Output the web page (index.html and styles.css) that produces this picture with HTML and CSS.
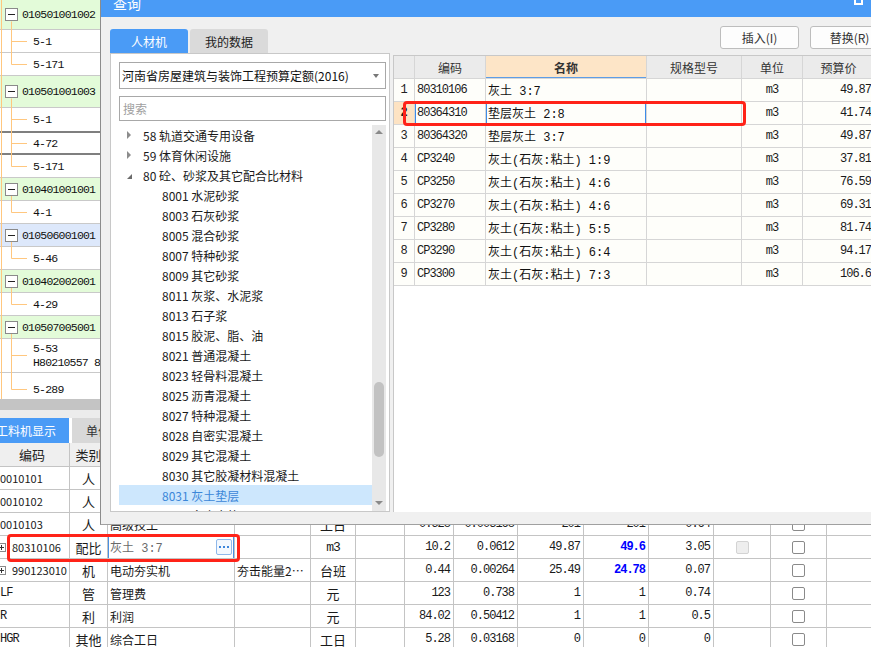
FILE: index.html
```html
<!DOCTYPE html>
<html lang="zh-CN">
<head>
<meta charset="utf-8">
<title>查询</title>
<link rel="stylesheet" href="styles.css">
</head>
<body>
<div class="app">
  <div class="upper">
    <div class="tree">
      <div class="trow grp h30"><span class="tbox"></span><span class="mono">010501001002</span></div>
      <div class="trow leaf"><span class="mono">5-1</span></div>
      <div class="trow leaf"><span class="mono">5-171</span></div>
      <div class="trow grp h32"><span class="tbox"></span><span class="mono">010501001003</span></div>
      <div class="trow leaf dark h25"><span class="mono">5-1</span></div>
      <div class="trow leaf dark h22"><span class="mono">4-72</span></div>
      <div class="trow leaf"><span class="mono">5-171</span></div>
      <div class="trow grp"><span class="tbox"></span><span class="mono">010401001001</span></div>
      <div class="trow leaf"><span class="mono">4-1</span></div>
      <div class="trow grp blue"><span class="tbox"></span><span class="mono">010506001001</span></div>
      <div class="trow leaf"><span class="mono">5-46</span></div>
      <div class="trow grp"><span class="tbox"></span><span class="mono">010402002001</span></div>
      <div class="trow leaf"><span class="mono">4-29</span></div>
      <div class="trow grp"><span class="tbox"></span><span class="mono">010507005001</span></div>
      <div class="trow leaf two"><span class="mono">5-53</span><span class="mono">H80210557 8:2</span></div>
      <div class="trow leaf last"><span class="mono">5-289</span></div>
      <svg class="tree-lines" width="101" height="399" viewBox="0 0 101 399" fill="none" stroke="#ffc77f" stroke-width="1">
        <path d="M1.5 0V399"/>
        <path d="M11.5 21.5V64.5M11.5 41.5H27M11.5 64.5H27"/>
        <path d="M11.5 98.5V166.5M11.5 119.5H27M11.5 143.5H27M11.5 166.5H27"/>
        <path d="M11.5 196V212.5H27"/>
        <path d="M11.5 242V258.5H27"/>
        <path d="M11.5 288V304.5H27"/>
        <path d="M11.5 334V389.5M11.5 355.5H27M11.5 389.5H27"/>
      </svg>
    </div>
    <div class="work"></div>
  </div>
  <div class="hscroll"></div>
  <div class="bgap"></div>
  <div class="bottom">
    <div class="btabs"><div class="btab on">工料机显示</div><div class="btab">单价构成</div><div class="btab">标准换算</div></div>
    <div class="bt">
      <div class="br bh"><div>编码</div><div>类别</div><div>名称</div><div>规格及型号</div><div>单位</div><div>损耗率</div><div>含量</div><div>数量</div><div>预算价</div><div>市场价</div><div>合价</div><div>是否暂估</div><div>锁定数量</div><div>原始含量</div></div>
      <div class="br"><div class="bc-code">0010101</div><div class="bc-c">人</div><div class="bc-n">普工</div><div></div><div class="bc-c">工日</div><div></div><div class="bc-r mono">0.176</div><div class="bc-r mono">0.001056</div><div class="bc-r mono">87.1</div><div class="bc-r mono">87.1</div><div class="bc-r mono">0.09</div><div></div><div class="bc-c"><span class="cb"></span></div><div></div></div>
      <div class="br"><div class="bc-code">0010102</div><div class="bc-c">人</div><div class="bc-n">一般技工</div><div></div><div class="bc-c">工日</div><div></div><div class="bc-r mono">0.352</div><div class="bc-r mono">0.002112</div><div class="bc-r mono">134</div><div class="bc-r mono">134</div><div class="bc-r mono">0.28</div><div></div><div class="bc-c"><span class="cb"></span></div><div></div></div>
      <div class="br"><div class="bc-code">0010103</div><div class="bc-c">人</div><div class="bc-n">高级技工</div><div></div><div class="bc-c">工日</div><div></div><div class="bc-r mono">0.528</div><div class="bc-r mono">0.003168</div><div class="bc-r mono">201</div><div class="bc-r mono">201</div><div class="bc-r mono">0.64</div><div></div><div class="bc-c"><span class="cb"></span></div><div></div></div>
      <div class="br"><div class="bc-code plus"><span class="pbox"></span>80310106</div><div class="bc-c">配比</div><div class="bc-n edit"><span class="mix">灰土 3:7</span><span class="more"><i></i><i></i><i></i></span></div><div></div><div class="bc-c mono">m3</div><div></div><div class="bc-r mono">10.2</div><div class="bc-r mono">0.0612</div><div class="bc-r mono">49.87</div><div class="bc-r mono blue">49.6</div><div class="bc-r mono">3.05</div><div class="bc-c"><span class="cb off"></span></div><div class="bc-c"><span class="cb"></span></div><div></div></div>
      <div class="br"><div class="bc-code plus"><span class="pbox"></span>990123010</div><div class="bc-c">机</div><div class="bc-n">电动夯实机</div><div class="bc-n">夯击能量2…</div><div class="bc-c">台班</div><div></div><div class="bc-r mono">0.44</div><div class="bc-r mono">0.00264</div><div class="bc-r mono">25.49</div><div class="bc-r mono blue">24.78</div><div class="bc-r mono">0.07</div><div></div><div class="bc-c"><span class="cb"></span></div><div></div></div>
      <div class="br"><div class="bc-code mono">LF</div><div class="bc-c">管</div><div class="bc-n">管理费</div><div></div><div class="bc-c">元</div><div></div><div class="bc-r mono">123</div><div class="bc-r mono">0.738</div><div class="bc-r mono">1</div><div class="bc-r mono">1</div><div class="bc-r mono">0.74</div><div></div><div class="bc-c"><span class="cb"></span></div><div></div></div>
      <div class="br"><div class="bc-code mono">R</div><div class="bc-c">利</div><div class="bc-n">利润</div><div></div><div class="bc-c">元</div><div></div><div class="bc-r mono">84.02</div><div class="bc-r mono">0.50412</div><div class="bc-r mono">1</div><div class="bc-r mono">1</div><div class="bc-r mono">0.5</div><div></div><div class="bc-c"><span class="cb"></span></div><div></div></div>
      <div class="br"><div class="bc-code mono">HGR</div><div class="bc-c">其他</div><div class="bc-n">综合工日</div><div></div><div class="bc-c">工日</div><div></div><div class="bc-r mono">5.28</div><div class="bc-r mono">0.03168</div><div class="bc-r mono">0</div><div class="bc-r mono">0</div><div class="bc-r mono">0</div><div></div><div class="bc-c"><span class="cb"></span></div><div></div></div>
      <div class="mark mark-b"></div>
    </div>
  </div>
</div>

<div class="dialog">
  <div class="dtitle"><span class="dtext">查询</span><span class="dmax"></span></div>
  <div class="dbody">
    <div class="dleft">
      <div class="dtabs"><div class="dtab on">人材机</div><div class="dtab">我的数据</div></div>
      <div class="dpanel">
        <div class="select"><span>河南省房屋建筑与装饰工程预算定额(2016)</span><span class="caret"></span></div>
        <div class="search">搜索</div>
        <div class="tlist">
          <div class="items">
            <div class="li"><span class="tri-r"></span>58 轨道交通专用设备</div>
            <div class="li"><span class="tri-r"></span>59 体育休闲设施</div>
            <div class="li"><span class="tri-d"></span>80 砼、砂浆及其它配合比材料</div>
            <div class="li ch">8001 水泥砂浆</div>
            <div class="li ch">8003 石灰砂浆</div>
            <div class="li ch">8005 混合砂浆</div>
            <div class="li ch">8007 特种砂浆</div>
            <div class="li ch">8009 其它砂浆</div>
            <div class="li ch">8011 灰浆、水泥浆</div>
            <div class="li ch">8013 石子浆</div>
            <div class="li ch">8015 胶泥、脂、油</div>
            <div class="li ch">8021 普通混凝土</div>
            <div class="li ch">8023 轻骨料混凝土</div>
            <div class="li ch">8025 沥青混凝土</div>
            <div class="li ch">8027 特种混凝土</div>
            <div class="li ch">8028 自密实混凝土</div>
            <div class="li ch">8029 其它混凝土</div>
            <div class="li ch">8030 其它胶凝材料混凝土</div>
            <div class="li ch sel">8031 灰土垫层</div>
            <div class="li ch">8033 多合土垫层</div>
          </div>
          <div class="vscroll"><span class="arr up"></span><span class="vsp"></span><span class="thumb"></span><span class="vfill"></span><span class="arr dn"></span></div>
        </div>
      </div>
    </div>
    <div class="dright">
      <div class="btns"><button class="btn">插入(I)</button><button class="btn">替换(R)</button></div>
      <div class="grid">
        <div class="gr gh"><div></div><div>编码</div><div class="hl">名称</div><div>规格型号</div><div>单位</div><div>预算价</div></div>
        <div class="gr"><div class="rn">1</div><div class="cd mono">80310106</div><div class="nm">灰土 3:7</div><div></div><div class="un mono">m3</div><div class="pr mono">49.87</div></div>
        <div class="gr cur"><div class="rn">2</div><div class="cd mono">80364310</div><div class="nm">垫层灰土 2:8</div><div></div><div class="un mono">m3</div><div class="pr mono">41.74</div></div>
        <div class="gr"><div class="rn">3</div><div class="cd mono">80364320</div><div class="nm">垫层灰土 3:7</div><div></div><div class="un mono">m3</div><div class="pr mono">49.87</div></div>
        <div class="gr"><div class="rn">4</div><div class="cd mono">CP3240</div><div class="nm">灰土(石灰:粘土) 1:9</div><div></div><div class="un mono">m3</div><div class="pr mono">37.81</div></div>
        <div class="gr"><div class="rn">5</div><div class="cd mono">CP3250</div><div class="nm">灰土(石灰:粘土) 4:6</div><div></div><div class="un mono">m3</div><div class="pr mono">76.59</div></div>
        <div class="gr"><div class="rn">6</div><div class="cd mono">CP3270</div><div class="nm">灰土(石灰:粘土) 4:6</div><div></div><div class="un mono">m3</div><div class="pr mono">69.31</div></div>
        <div class="gr"><div class="rn">7</div><div class="cd mono">CP3280</div><div class="nm">灰土(石灰:粘土) 5:5</div><div></div><div class="un mono">m3</div><div class="pr mono">81.74</div></div>
        <div class="gr"><div class="rn">8</div><div class="cd mono">CP3290</div><div class="nm">灰土(石灰:粘土) 6:4</div><div></div><div class="un mono">m3</div><div class="pr mono">94.17</div></div>
        <div class="gr"><div class="rn">9</div><div class="cd mono">CP3300</div><div class="nm">灰土(石灰:粘土) 7:3</div><div></div><div class="un mono">m3</div><div class="pr mono">106.6</div></div>
        <div class="mark mark-d"></div>
      </div>
    </div>
  </div>
</div>
</body>
</html>
```

FILE: styles.css
```css
* { box-sizing: border-box; }
html, body { margin: 0; padding: 0; overflow: hidden; }
body {
  width: 871px;
  height: 647px;
  position: relative;
  background: #fff;
  font-family: "Noto Sans CJK SC", "Microsoft YaHei", sans-serif;
  font-size: 12px;
  color: #1a1a1a;
}
.mono {
  font-family: "Liberation Mono", "Noto Sans CJK SC", monospace;
  letter-spacing: -1px;
}

/* ---------- background application ---------- */
.app { display: flex; flex-direction: column; height: 647px; }
.upper { display: flex; height: 399px; flex: none; }
.tree {
  position: relative;
  width: 101px;
  border-right: 1px solid #a8a8a8;
  overflow: hidden;
  flex: none;
}
.work { flex: 1; background: #fff; }
.trow {
  display: flex;
  align-items: center;
  height: 23px;
  border-bottom: 1px solid #c9c9c9;
  white-space: nowrap;
  color: #111;
}
.tree .mono { font-size: 11.5px; letter-spacing: -0.8px; }
.grp { background: #e3fbd9; padding-left: 5px; gap: 4px; }
.grp.blue { background: #dde8fb; }
.leaf { padding-left: 33px; background: #fff; }
.h30 { height: 30px; }
.h32 { height: 32px; }
.dark { border-bottom: 2px solid #7f7f7f; }
.h25 { height: 25px; }
.h22 { height: 22px; }
.two {
  flex-direction: column;
  align-items: flex-start;
  justify-content: center;
  height: 34px;
  line-height: 14px;
}
.last { height: 26px; border-bottom: 0; padding-top: 6px; }
.tbox {
  flex: none;
  width: 13px;
  height: 13px;
  border: 1px solid #8a8a8a;
  background: linear-gradient(#222, #222) center / 7px 1px no-repeat, #fff;
}
.tree-lines { position: absolute; left: 0; top: 0; }

.hscroll { height: 11px; background: #c4c4c4; flex: none; }
.bgap { height: 8px; background: #ececec; flex: none; }

.bottom { display: flex; flex-direction: column; flex: 1; }
.btabs { display: flex; gap: 3px; height: 25px; flex: none; background: #fff; }
.btab {
  display: flex;
  align-items: center;
  padding: 0 12px 0 14px;
  background: #d8d8d8;
  color: #333;
  font-size: 12px;
}
.btab.on {
  background: #4a9bf6;
  color: #fff;
  margin-left: -4px;
  padding: 0 13px 0 0;
  font-size: 12px;
}
.bt { position: relative; margin-left: -5px; }
.br {
  display: grid;
  grid-template-columns: 75px 38px 127px 76px 45px 49px 49px 64px 66px 65px 65px 57px 56px 60px;
  height: 23px;
  border-bottom: 1px solid #c4c4c4;
  background: #fff;
}
.br > div {
  display: flex;
  align-items: center;
  border-right: 1px solid #c4c4c4;
  white-space: nowrap;
  overflow: hidden;
  font-size: 12px;
}
.bh { height: 24px; background: #efefef; }
.bh > div { justify-content: center; color: #222; font-size: 13px; }
.br .bc-code { padding-left: 5px; font-size: 11px; }
.br .bc-code.mono { font-size: 12px; }
.br .bc-code.plus { padding-left: 2px; gap: 6px; }
.br .bc-c { justify-content: center; font-size: 13px; }
.br .bc-n { padding-left: 2px; font-size: 12px; }
.br .bc-r { justify-content: flex-end; padding-right: 3px; }
.br .blue { color: #0000ff; font-weight: bold; }
.pbox {
  flex: none;
  width: 9px;
  height: 9px;
  border: 1px solid #8a8a8a;
  background:
    linear-gradient(#333, #333) center / 5px 1px no-repeat,
    linear-gradient(#333, #333) center / 1px 5px no-repeat,
    #fff;
}
.br .edit {
  justify-content: space-between;
  padding-right: 2px;
  box-shadow: inset 1px 0 #4a90e2, inset -1px 0 #4a90e2;
}
.mix {
  font-family: "Liberation Mono", "Noto Sans CJK SC", monospace;
  color: #6a6a6a;
  font-size: 12px;
}
.more {
  display: flex;
  align-items: center;
  justify-content: center;
  gap: 2px;
  width: 16px;
  height: 16px;
  border: 1px solid #8fb8ea;
  border-radius: 2px;
  background: #f3f8fe;
}
.more i { width: 2px; height: 2px; background: #3d86db; }
.cb {
  width: 13px;
  height: 13px;
  border: 1px solid #8a8a8a;
  border-radius: 2px;
  background: #fff;
}
.cb.off { border-color: #d3d3d3; background: #eeeeee; }

.mark {
  position: absolute;
  border: 3px solid #ff2318;
  border-radius: 4px;
  pointer-events: none;
}
.mark-b { left: 12px; top: 91px; width: 233px; height: 28px; }

/* ---------- dialog window ---------- */
.dialog {
  position: absolute;
  left: 100px;
  top: -12px;
  width: 800px;
  height: 537px;
  background: #f0f0f0;
  border-left: 1px solid #8c8c8c;
  border-bottom: 1px solid #a0a0a0;
  display: flex;
  flex-direction: column;
}
.dtitle {
  height: 29px;
  flex: none;
  background: #4a9bf6;
  display: flex;
  align-items: center;
  justify-content: space-between;
  padding: 0 37px 0 12px;
}
.dtext { color: #fff; font-size: 14px; }
.dmax {
  align-self: flex-start;
  margin-top: 5px;
  width: 9px;
  height: 12px;
  border: 2px solid #fff;
}
.dbody {
  flex: 1;
  display: grid;
  grid-template-columns: 280px 1fr;
  column-gap: 3px;
  padding: 9px 0 12px 9px;
  min-height: 0;
}
.dleft { display: flex; flex-direction: column; padding-top: 3px; min-height: 0; }
.dtabs { display: flex; gap: 2px; height: 24px; flex: none; }
.dtab {
  width: 78px;
  display: flex;
  align-items: center;
  justify-content: center;
  background: #dadada;
  border-radius: 3px 3px 0 0;
  color: #222;
  font-size: 12px;
}
.dtab.on { background: #4a9bf6; color: #fff; }
.dpanel {
  flex: 1;
  min-height: 0;
  background: #fff;
  border: 1px solid #c8c8c8;
  padding: 8px 3px 0 8px;
  display: flex;
  flex-direction: column;
}
.select {
  height: 27px;
  flex: none;
  border: 1px solid #a8a8a8;
  display: flex;
  align-items: center;
  justify-content: space-between;
  padding: 0 6px 0 2px;
  font-size: 12px;
  color: #111;
  white-space: nowrap;
}
.caret {
  width: 0;
  height: 0;
  border-top: 4px solid #777;
  border-left: 3.5px solid transparent;
  border-right: 3.5px solid transparent;
}
.search {
  margin-top: 7px;
  height: 25px;
  flex: none;
  border: 1px solid #a8a8a8;
  display: flex;
  align-items: center;
  padding-left: 3px;
  color: #a0a0a0;
  font-size: 12px;
}
.tlist { margin-top: 4px; flex: 1; min-height: 0; display: flex; overflow: hidden; }
.items { flex: 1; overflow: hidden; }
.li {
  height: 20px;
  display: flex;
  align-items: center;
  padding-left: 8px;
  white-space: nowrap;
  color: #1a1a1a;
  font-size: 12px;
}
.li.ch { padding-left: 43px; }
.li.sel { background: #cde7fd; color: #3b86d8; }
.tri-r {
  width: 0;
  height: 0;
  border-left: 4px solid #8c8c8c;
  border-top: 4px solid transparent;
  border-bottom: 4px solid transparent;
  margin-right: 12px;
}
.tri-d {
  width: 0;
  height: 0;
  border-right: 5px solid #6b6b6b;
  border-top: 5px solid transparent;
  margin-right: 11px;
  margin-top: 3px;
}
.vscroll {
  width: 14px;
  flex: none;
  background: #e8e8e8;
  display: flex;
  flex-direction: column;
  align-items: center;
}
.arr { flex: none; width: 0; height: 0; }
.arr.up { border-bottom: 4px solid #8a8a8a; border-left: 4px solid transparent; border-right: 4px solid transparent; margin-top: 5px; margin-bottom: 5px; }
.arr.dn { border-top: 4px solid #8a8a8a; border-left: 4px solid transparent; border-right: 4px solid transparent; margin-top: 5px; margin-bottom: 6px; }
.vsp { height: 243px; flex: none; }
.thumb { width: 10px; height: 75px; flex: none; background: #c2c2c2; border-radius: 5px; }
.vfill { flex: 1; }

.dright { display: flex; flex-direction: column; min-height: 0; }
.btns {
  height: 23px;
  flex: none;
  display: flex;
  justify-content: flex-end;
  gap: 11px;
  padding-right: 11px;
}
.btn {
  width: 79px;
  height: 23px;
  background: #fdfdfd;
  border: 1px solid #bdbdbd;
  border-radius: 3px;
  font-family: "Noto Sans CJK SC", sans-serif;
  font-size: 12px;
  color: #333;
  padding: 0;
}
.grid {
  position: relative;
  margin-top: 6px;
  flex: 1;
  background: #fff;
  border-left: 1px solid #c8c8c8;
  border-top: 1px solid #c8c8c8;
  overflow: hidden;
}
.gr {
  display: grid;
  grid-template-columns: 21px 71px 161px 95px 61px 72px;
  height: 23px;
  border-bottom: 1px solid #d6d6d6;
  background: #fefefa;
}
.gr > div {
  display: flex;
  align-items: center;
  border-right: 1px solid #d6d6d6;
  white-space: nowrap;
  overflow: hidden;
  font-size: 12px;
}
.gh { background: #ebebeb; }
.gh > div { justify-content: center; color: #333; }
.gh .hl { background: #fde5c7; font-weight: bold; box-shadow: inset 0 -1px #5d9de6; }
.gr .rn {
  justify-content: center;
  font-family: "Liberation Mono", monospace;
  color: #222;
}
.gr.cur .rn { background: #fde3c3; font-weight: bold; }
.gr.cur .cd { box-shadow: inset 1px 0 #3d8ce8; }
.gr.cur .nm { box-shadow: inset 0 0 0 1px #3d8ce8; }
.gr .cd { padding-left: 2px; }
.gr .nm {
  padding-left: 2px;
  font-family: "Liberation Mono", "Noto Sans CJK SC", monospace;
  color: #111;
}
.gr .un { justify-content: center; }
.gr .pr { justify-content: flex-end; padding-right: 3px; }
.mark-d { left: 9px; top: 45px; width: 343px; height: 25px; }
```
